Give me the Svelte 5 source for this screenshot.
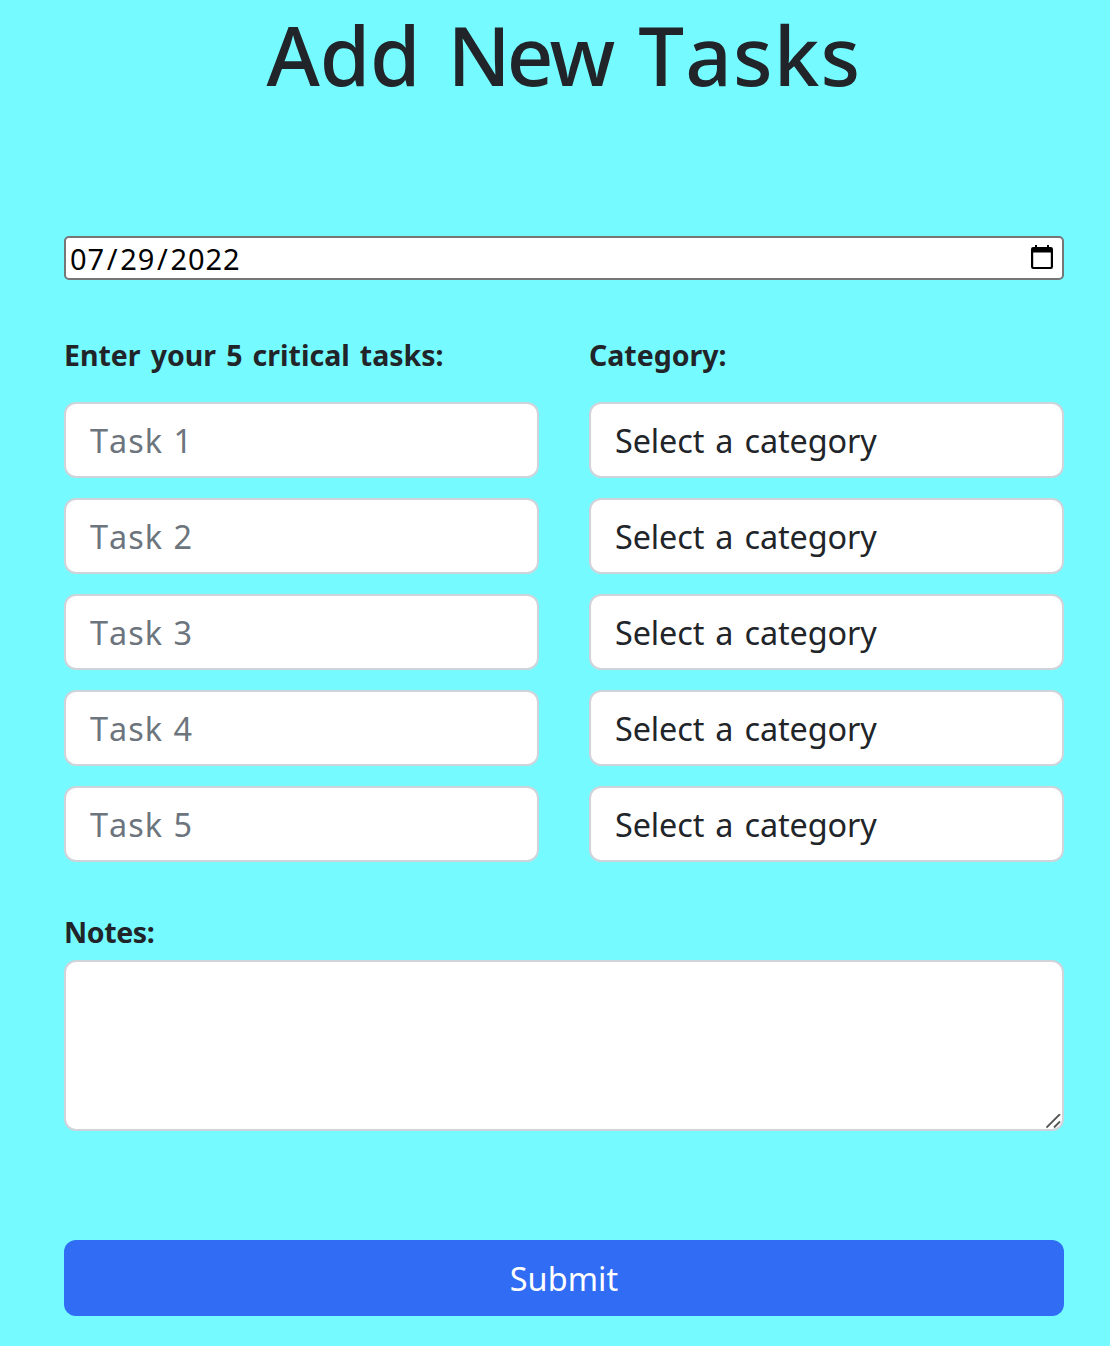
<script>
  const tasks = [1, 2, 3, 4, 5];
</script>

<main>
  <h1>Add <span class="tight">New</span> <span class="loose">Tasks</span></h1>

  <form onsubmit={(e) => e.preventDefault()}>
    <div class="date">
      <span>07<i>/</i>29<i>/</i>2022</span>
      <svg class="calendar" viewBox="0 0 22 24" aria-hidden="true">
        <path d="M4 0h2v2h10V0h2v2h1.8A2.2 2.2 0 0 1 22 4.2v17.6a2.2 2.2 0 0 1-2.2 2.2H2.2A2.2 2.2 0 0 1 0 21.800V4.200A2.200 2.200 0 0 1 2.200 2H4zM2.200 7.500V22h17.600V7.500z" fill-rule="evenodd" />
      </svg>
    </div>

    <div class="columns">
      <div class="column">
        <div class="label">Enter your 5 critical tasks:</div>
        {#each tasks as n}
          <input class="field task" type="text" placeholder={`Task ${n}`} />
        {/each}
      </div>
      <div class="column">
        <div class="label">Category:</div>
        {#each tasks as n}
          <div class="field select" role="button" tabindex="0">Select a category</div>
        {/each}
      </div>
    </div>

    <label class="label notes-label" for="notes">Notes:</label>
    <div class="notes">
      <textarea id="notes"></textarea>
      <svg class="grip" viewBox="0 0 15 15" aria-hidden="true">
        <path d="M.5 13.500 14 0M8 13.500l6-6" />
      </svg>
    </div>

    <button type="submit">Submit</button>
  </form>
</main>

<style>
  :global(body) {
    margin: 0;
    background: #75fbff;
  }
  main {
    box-sizing: border-box;
    height: 1346px;
    padding: 0 46px 0 64px;
    background: #75fbff;
    color: #212529;
    font-family: 'Noto Sans', 'Open Sans', sans-serif;
    font-kerning: none;
  }
  h1 {
    margin: 0;
    height: 234px;
    font-size: 81.5px;
    font-weight: 500;
    line-height: 110px;
    letter-spacing: -0.2px;
    word-spacing: 6px;
    text-align: center;
    white-space: nowrap;
  }
  .tight {
    letter-spacing: -4px;
  }
  .loose {
    letter-spacing: 1.2px;
  }
  form {
    display: flex;
    flex-direction: column;
    padding-top: 2px;
  }
  .date {
    box-sizing: border-box;
    height: 44px;
    display: flex;
    align-items: center;
    justify-content: space-between;
    padding: 0 9px 0 4px;
    background: #fff;
    border: 2px solid #767676;
    border-radius: 5px;
    color: #000;
    font-size: 29px;
    line-height: 40px;
    letter-spacing: 0.9px;
  }
  .date span {
    padding-top: 1px;
  }
  .date i {
    font-style: normal;
    padding: 0 1.8px;
  }
  .calendar {
    width: 22px;
    height: 24px;
    margin-top: -2px;
  }
  .columns {
    display: grid;
    grid-template-columns: 1fr 1fr;
    gap: 50px;
    margin-top: 55px;
  }
  .column {
    display: flex;
    flex-direction: column;
    gap: 20px;
  }
  .label {
    font-size: 28.5px;
    font-weight: 700;
    line-height: 40px;
    word-spacing: 2.7px;
    white-space: nowrap;
  }
  .column .label {
    height: 47px;
  }
  .field {
    box-sizing: border-box;
    width: 100%;
    height: 76px;
    margin: 0;
    padding: 0 24px;
    border: 2px solid #ced4da;
    border-radius: 12px;
    background: #fff;
    color: #212529;
    font: 400 32.4px/72px 'Noto Sans', 'Open Sans', sans-serif;
    font-kerning: none;
    outline: none;
  }
  .select {
    letter-spacing: -0.1px;
    word-spacing: 2.7px;
  }
  .task {
    letter-spacing: 1px;
    word-spacing: 1.2px;
  }
  .task::placeholder {
    color: #6c757d;
    opacity: 1;
  }
  .notes-label {
    margin-top: 50px;
    letter-spacing: -0.4px;
  }
  .notes {
    position: relative;
    height: 171px;
    margin-top: 8px;
  }
  textarea {
    box-sizing: border-box;
    display: block;
    width: 100%;
    height: 100%;
    padding: 12px 24px;
    border: 2px solid #ced4da;
    border-radius: 12px;
    background: #fff;
    resize: none;
    outline: none;
  }
  .grip {
    position: absolute;
    right: 3px;
    bottom: 2px;
    width: 15px;
    height: 15px;
    fill: none;
    stroke: #555;
    stroke-width: 1.8;
  }
  button {
    height: 76px;
    margin: 109px 0 0;
    padding: 0;
    border: 0;
    border-radius: 12px;
    background: #316cf4;
    color: #fff;
    font: 400 32.4px/76px 'Noto Sans', 'Open Sans', sans-serif;
    letter-spacing: 0.1px;
  }
</style>
